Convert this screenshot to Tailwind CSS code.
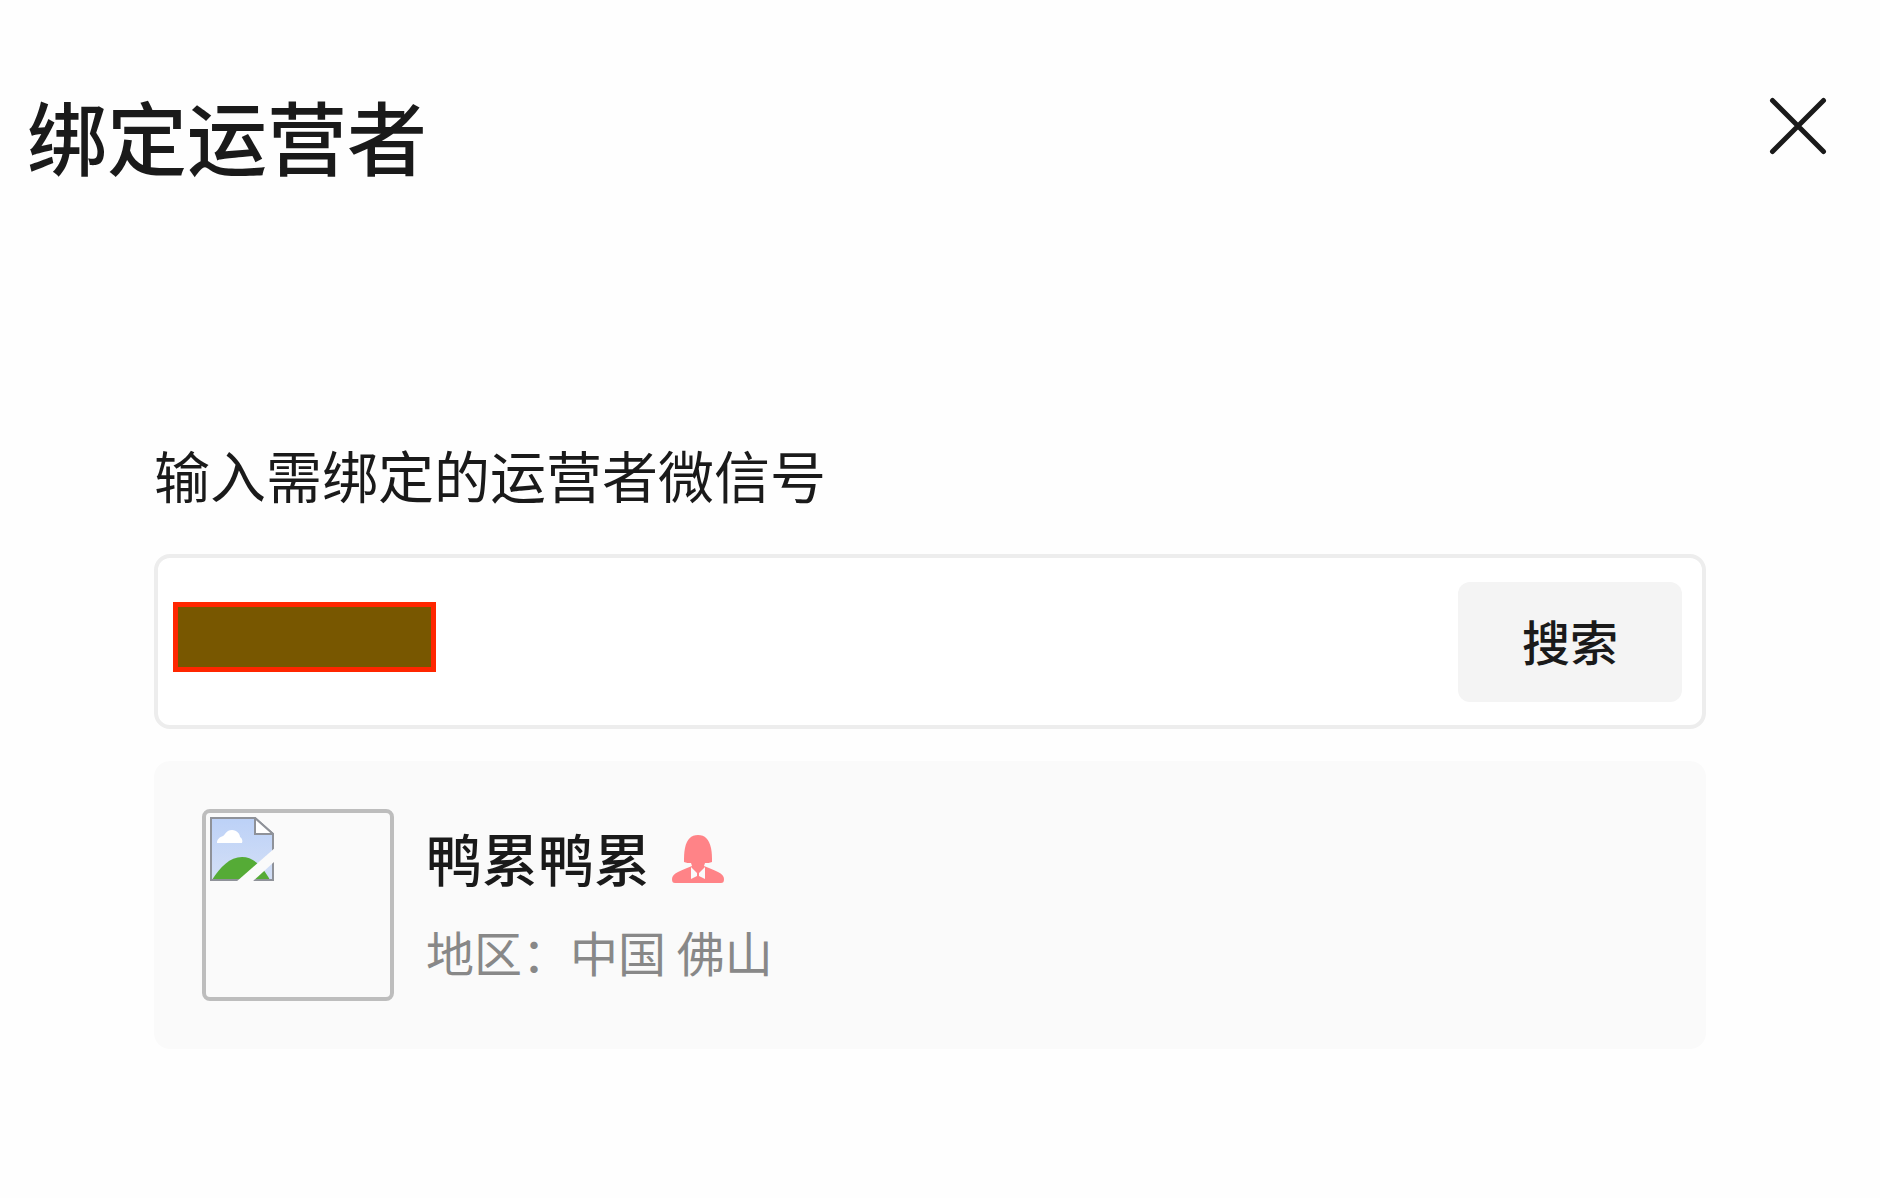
<!DOCTYPE html>
<html lang="zh-CN">
<head>
    <meta charset="UTF-8">
    <meta name="viewport" content="width=device-width, initial-scale=1.0">
    <title>绑定运营者</title>
    <script src="https://cdn.jsdelivr.net/npm/@tailwindcss/browser@4"></script>
</head>
<body class="min-h-screen bg-[#fefefe] font-['Noto_Sans_CJK_SC',sans-serif] text-[#1a1a1a]">
    <!-- Header -->
    <header class="flex items-start justify-between pt-20 pr-[50px] pl-[27px]">
        <h1 class="text-[80px] leading-[108px] font-medium">绑定运营者</h1>
        <button type="button" aria-label="关闭" class="mt-[14px] size-16 cursor-pointer">
            <svg class="size-16" viewBox="0 0 64 64" fill="none" stroke="currentColor" stroke-width="5" stroke-linecap="round">
                <path d="M6.5 6.5l51 51M57.5 6.5l-51 51" />
            </svg>
        </button>
    </header>

    <main class="pt-[244px] pr-[174px] pl-[154px]">
        <!-- Search -->
        <form onsubmit="return false">
            <label for="wechatId" class="block text-[56px] leading-[84px]">输入需绑定的运营者微信号</label>
            <div class="relative mt-[38px] flex h-[175px] items-center rounded-2xl border-4 border-[#ededed] bg-white pr-5 pl-4">
                <input id="wechatId" type="text" class="h-full min-w-0 flex-1 text-5xl outline-none">
                <button type="submit" class="h-[120px] w-56 cursor-pointer rounded-xl bg-[#f4f4f4] pb-1 text-5xl font-medium">搜索</button>
                <span class="absolute top-11 left-[15px] h-[70px] w-[263px] border-5 border-[#ff2600] bg-[#785700]"></span>
            </div>
        </form>

        <!-- Result -->
        <section class="mt-8 flex items-center gap-8 rounded-2xl bg-[#fafafa] p-12">
            <div class="size-48 shrink-0 rounded-lg border-4 border-[#bdbdbd] p-1">
                <svg class="size-16" viewBox="0 0 64 64" role="img" aria-label="头像">
                    <defs>
                        <linearGradient id="sky" x1="0" y1="0" x2="0" y2="1">
                            <stop offset="0" stop-color="#bcd1f7" />
                            <stop offset="1" stop-color="#d3dff6" />
                        </linearGradient>
                    </defs>
                    <path d="M1 1h44l18 16v46H1z" fill="url(#sky)" />
                    <path d="M7 26c0-4 3-6 6-7 2-1 3-6 9-6 5 0 8 4 8 7 2 1 3 4 2 6z" fill="#fff" />
                    <path d="M2 63c8-13 18-23 30-23s21 10 28 23z" fill="#55ab36" />
                    <path d="M1 1h44l18 16v46H1z" fill="none" stroke="#8f9299" stroke-width="2" />
                    <path d="M45 1v16h18z" fill="#fff" stroke="#8f9299" stroke-width="2" />
                    <path d="M65 31v13L42 65H26z" fill="#fafafa" />
                </svg>
            </div>
            <div class="pb-2">
                <div class="flex items-center gap-[22px]">
                    <h2 class="text-[56px] leading-[84px] font-medium">鸭累鸭累</h2>
                    <svg class="mt-1 h-12 w-[52px]" viewBox="0 0 52 48" fill="#ff8387" role="img" aria-label="女">
                        <path d="M12 27c0-5 0-9 1-14C15 4 19 0 26 0s11 4 13 13c1 5 1 9 1 14-2 1-5 1-7 1l-1 3c5 2 10 4 14 6 4 2 6 4 6 7 0 3-1 4-3 4H3c-2 0-3-1-3-4 0-3 2-5 6-7 4-2 9-4 14-6l-1-3c-2 0-5 0-7-1z" />
                        <path d="M19 32l6 6v3l-6 3zM33 32l-6 6v3l6 3z" fill="#fafafa" />
                    </svg>
                </div>
                <p class="mt-4 text-5xl leading-[72px] text-[#888888]">地区：中国 佛山</p>
            </div>
        </section>
    </main>
</body>
</html>
